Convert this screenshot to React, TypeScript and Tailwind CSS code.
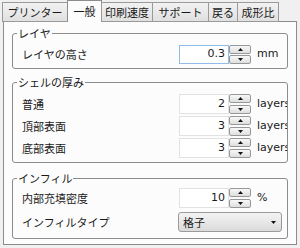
import React from "react";

const tabs = [
  { label: "プリンター", w: "w-[66px]" },
  { label: "一般", w: "w-[35px]", sel: true },
  { label: "印刷速度", w: "w-[52px]" },
  { label: "サポート", w: "w-[57px]" },
  { label: "戻る", w: "w-[30px]" },
  { label: "成形比", w: "w-[42px]" },
];

function Up() {
  return (
    <svg width="5" height="3" viewBox="0 0 5 3">
      <path d="M0 3 L2.5 0 L5 3Z" fill="#111" />
    </svg>
  );
}
function Down() {
  return (
    <svg width="5" height="3" viewBox="0 0 5 3">
      <path d="M0 0 L2.5 3 L5 0Z" fill="#111" />
    </svg>
  );
}

function Spin() {
  return (
    <div className="flex flex-col justify-between w-[22px] h-full">
      <div className="h-[9px] rounded-[2px] border border-[#97989a] bg-linear-to-b from-[#f8f8f8] to-[#dedede] flex items-center justify-center">
        <Up />
      </div>
      <div className="h-[9px] rounded-[2px] border border-[#97989a] bg-linear-to-b from-[#f8f8f8] to-[#dedede] flex items-center justify-center">
        <Down />
      </div>
    </div>
  );
}

function NumRow({
  label,
  value,
  unit,
  h,
  focus,
}: {
  label: string;
  value: string;
  unit: string;
  h: string;
  focus?: boolean;
}) {
  return (
    <div className={`flex items-center ${h}`}>
      <div className="flex-1 pl-[9px] whitespace-nowrap">{label}</div>
      <div className="flex h-full">
        <div
          className={`w-[50px] h-full bg-white border ${
            focus ? "border-[#8fbce8]" : "border-[#e2e2e2]"
          } flex items-center justify-end pr-[3px] font-['DejaVu_Sans',sans-serif]`}
        >
          {value}
        </div>
        <Spin />
      </div>
      <div className="w-[30px] ml-[6px] overflow-hidden whitespace-nowrap font-['DejaVu_Sans',sans-serif]">
        {unit}
      </div>
    </div>
  );
}

function Group({
  title,
  className,
  children,
}: {
  title: string;
  className: string;
  children: React.ReactNode;
}) {
  return (
    <fieldset
      className={`border border-[#8c8c8c] rounded-[3px] ml-[8px] mr-[8px] ${className}`}
    >
      <legend className="ml-[4px] px-[1px] leading-[16px]">{title}</legend>
      {children}
    </fieldset>
  );
}

export default function App() {
  return (
    <div className="w-[300px] h-[248px] bg-[#f0f0f0] flex flex-col text-[11px] text-[#1a1a1a] font-['Noto_Sans_CJK_JP',sans-serif] overflow-hidden">
      <div className="flex items-end h-[22px] pl-[2px] -mb-px relative z-10">
        {tabs.map((t, i) =>
          t.sel ? (
            <div
              key={i}
              className={`${t.w} h-[22px] -ml-px bg-[#fcfcfc] border border-b-0 border-[#8c8c8c] flex items-center justify-center leading-none pb-[1px]`}
            >
              {t.label}
            </div>
          ) : (
            <div
              key={i}
              className={`${t.w} h-[20px] ${
                i === 0 ? "" : "-ml-px"
              } bg-linear-to-b from-[#f2f2f2] to-[#e0e0e0] border border-[#9a9a9a] flex items-center justify-center leading-none`}
            >
              {t.label}
            </div>
          )
        )}
      </div>
      <div className="mx-[3px] mb-[3px] flex-1 bg-[#fcfcfc] border border-[#8c8c8c] pt-[3px] flex flex-col">
        <Group title="レイヤ" className="pt-[4px] pb-[4px]">
          <NumRow label="レイヤの高さ" value="0.3" unit="mm" h="h-[19px]" focus />
        </Group>
        <Group title="シェルの厚み" className="mt-[5px] pt-[4px] pb-[4px]">
          <div className="flex flex-col gap-[2px]">
            <NumRow label="普通" value="2" unit="layers" h="h-[20px]" />
            <NumRow label="頂部表面" value="3" unit="layers" h="h-[20px]" />
            <NumRow label="底部表面" value="3" unit="layers" h="h-[20px]" />
          </div>
        </Group>
        <Group title="インフィル" className="mt-[7px] pt-[2px] pb-[6px]">
          <div className="flex flex-col gap-[4px]">
            <NumRow label="内部充填密度" value="10" unit="%" h="h-[20px]" />
            <div className="flex items-center h-[20px]">
              <div className="flex-1 pl-[9px] whitespace-nowrap">インフィルタイプ</div>
              <div className="w-[104px] h-full mr-[5px] rounded-[3px] border border-[#9a9a9a] bg-linear-to-b from-[#f4f4f4] to-[#dadada] flex items-center justify-between pl-[4px] pr-[5px]">
                <span>格子</span>
                <Down />
              </div>
            </div>
          </div>
        </Group>
      </div>
    </div>
  );
}
